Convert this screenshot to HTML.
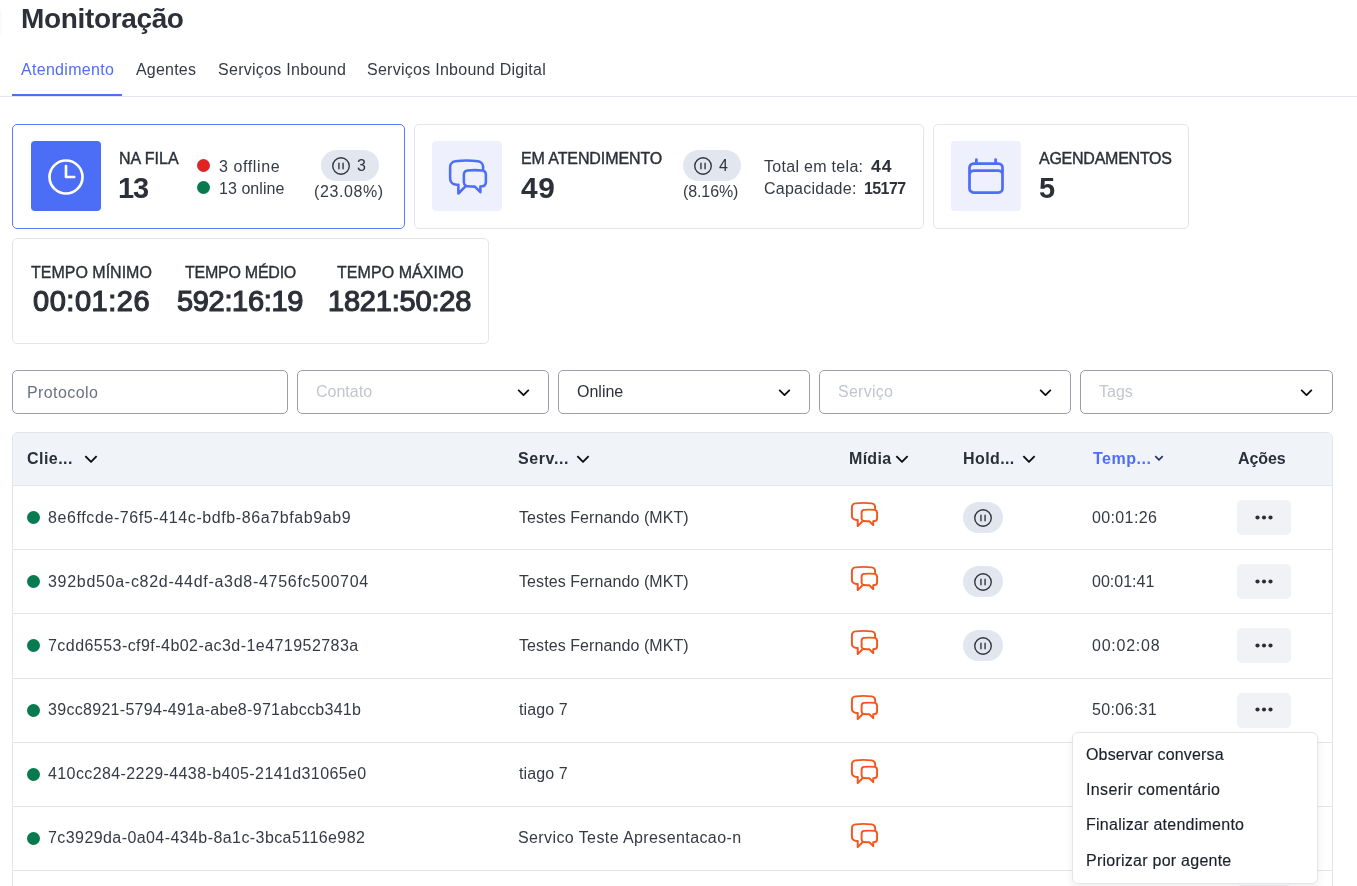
<!DOCTYPE html>
<html><head><meta charset="utf-8">
<style>
*{box-sizing:border-box;margin:0;padding:0}
html,body{width:1357px;height:886px;overflow:hidden;background:#fff}
body{font-family:"Liberation Sans",sans-serif;color:#2f333d}
#w{position:absolute;left:0;top:0;width:1357px;height:886px;will-change:transform;background:#fff}
.a{position:absolute;white-space:nowrap}
.card{position:absolute;border:1px solid #e3e5ea;border-radius:5px;background:#fff}
.ico{position:absolute;width:70px;height:70px;border-radius:4px;background:#eef1fd}
.pill{position:absolute;height:31px;border-radius:16px;background:#e2e7ef}
.dot{position:absolute;width:13px;height:13px;border-radius:50%}
.inp{position:absolute;top:370px;height:44px;border:1px solid #9a9fab;border-radius:5px;background:#fff}
.inp span{position:absolute;top:12px;font-size:16px;line-height:20px}
.chev{position:absolute}
.th{position:absolute;font-weight:700;font-size:16px;line-height:20px;top:449px;color:#2b2f38}
.row{position:absolute;left:12px;width:1321px;height:66px;border-top:1px solid #e3e5ea}
.cell{position:absolute;font-size:16px;line-height:20px;top:22px;color:#353a45}
.gdot{position:absolute;left:15px;top:25px;width:13px;height:13px;border-radius:50%;background:#087a4f}
.hp{position:absolute;left:951px;top:16px;width:40px;height:31px;border-radius:16px;background:#e2e7ef}
.more{position:absolute;left:1225px;top:14px;width:54px;height:35px;border-radius:5px;background:#f0f2f6}
</style></head><body><div id="w">
<div class="a" style="left:-10px;top:8px;width:12px;height:29px;border-radius:6px;background:#fafafa"></div>
<div class="a" style="left:21px;top:3px;font-size:28px;line-height:32px;color:#2d3039;font-weight:700;letter-spacing:-0.35px">Monitoração</div>
<div class="a" style="left:21px;top:60px;font-size:16px;line-height:20px;color:#4f6ef7;letter-spacing:0.3px">Atendimento</div>
<div class="a" style="left:136px;top:60px;font-size:16px;line-height:20px;color:#353a45;letter-spacing:0.2px">Agentes</div>
<div class="a" style="left:218px;top:60px;font-size:16px;line-height:20px;color:#353a45;letter-spacing:0.28px">Serviços Inbound</div>
<div class="a" style="left:367px;top:60px;font-size:16px;line-height:20px;color:#353a45;letter-spacing:0.27px">Serviços Inbound Digital</div>
<div class="a" style="left:0;top:96px;width:1357px;height:1px;background:#e2e6ee"></div>
<div class="a" style="left:12px;top:94px;width:110px;height:2px;background:#4f6ef7"></div>
<div class="card" style="left:12px;top:124px;width:393px;height:105px;border-color:#5b78f5"></div>
<div class="ico" style="left:31px;top:141px;background:#4c6ef6"></div>
<svg class="a" style="left:44px;top:155px" width="44" height="44" viewBox="0 0 24 24" fill="none" stroke="#fff" stroke-width="1.45" stroke-linecap="round" stroke-linejoin="round"><path d="M12 6v6h4.5m4.5 0a9 9 0 1 1-18 0 9 9 0 0 1 18 0Z"/></svg>
<div class="a" style="left:119px;top:149px;font-size:16px;line-height:20px;color:#2d3039;-webkit-text-stroke:0.4px #2d3039">NA FILA</div>
<div class="a" style="left:118px;top:173px;font-size:29px;line-height:30px;color:#2d3039;font-weight:700;letter-spacing:-1.2px">13</div>
<div class="dot" style="left:197px;top:159px;background:#e02424"></div>
<div class="dot" style="left:197px;top:181px;background:#087a4f"></div>
<div class="a" style="left:219px;top:157px;font-size:16px;line-height:20px;color:#353a45;letter-spacing:0.6px">3 offline</div>
<div class="a" style="left:219px;top:179px;font-size:16px;line-height:20px;color:#353a45;letter-spacing:0.05px">13 online</div>
<div class="pill" style="left:321px;top:150px;width:58px"></div>
<svg class="a" style="left:330px;top:155px" width="22" height="22" viewBox="0 0 24 24" fill="none" stroke="#30333c" stroke-width="1.5" stroke-linecap="round" stroke-linejoin="round"><path d="M14.25 9v6m-4.5 0V9M21 12a9 9 0 1 1-18 0 9 9 0 0 1 18 0Z"/></svg>
<div class="a" style="left:357px;top:156px;font-size:16px;line-height:20px;color:#30333c">3</div>
<div class="a" style="left:314px;top:182px;font-size:16px;line-height:20px;color:#353a45;letter-spacing:0.6px">(23.08%)</div>
<div class="card" style="left:414px;top:124px;width:510px;height:105px"></div>
<div class="ico" style="left:432px;top:141px"></div>
<svg class="a" style="left:446px;top:155px" width="44" height="44" viewBox="0 0 24 24" fill="none" stroke="#4f6ef7" stroke-width="1.4" stroke-linecap="round" stroke-linejoin="round"><path d="M20.25 8.511c.884.284 1.5 1.128 1.5 2.097v4.286c0 1.136-.847 2.1-1.98 2.193-.34.027-.68.052-1.02.072v3.091l-3-3c-1.354 0-2.694-.055-4.02-.163a2.115 2.115 0 0 1-.825-.242m9.345-8.334a2.126 2.126 0 0 0-.476-.095 48.64 48.64 0 0 0-8.048 0c-1.131.094-1.976 1.057-1.976 2.192v4.286c0 .837.46 1.58 1.155 1.951m9.345-8.334V6.637c0-1.621-1.152-3.026-2.760-3.235A48.455 48.455 0 0 0 11.25 3c-2.115 0-4.198.137-6.240.402-1.608.209-2.760 1.614-2.760 3.235v6.226c0 1.621 1.152 3.026 2.760 3.235.577.075 1.157.14 1.740.194V21l4.155-4.155"/></svg>
<div class="a" style="left:521px;top:149px;font-size:16px;line-height:20px;color:#2d3039;letter-spacing:-0.1px;-webkit-text-stroke:0.4px #2d3039">EM ATENDIMENTO</div>
<div class="a" style="left:521px;top:173px;font-size:29px;line-height:30px;color:#2d3039;font-weight:700;letter-spacing:0.5px;transform:scaleX(1.03);transform-origin:0 0">49</div>
<div class="pill" style="left:683px;top:150px;width:58px"></div>
<svg class="a" style="left:692px;top:155px" width="22" height="22" viewBox="0 0 24 24" fill="none" stroke="#30333c" stroke-width="1.5" stroke-linecap="round" stroke-linejoin="round"><path d="M14.25 9v6m-4.5 0V9M21 12a9 9 0 1 1-18 0 9 9 0 0 1 18 0Z"/></svg>
<div class="a" style="left:719px;top:156px;font-size:16px;line-height:20px;color:#30333c">4</div>
<div class="a" style="left:683px;top:182px;font-size:16px;line-height:20px;color:#353a45;letter-spacing:-0.1px">(8.16%)</div>
<div class="a" style="left:764px;top:157px;font-size:16px;line-height:20px;color:#353a45;letter-spacing:0.3px">Total em tela:</div>
<div class="a" style="left:871px;top:157px;font-size:16px;line-height:20px;color:#2d3039;font-weight:700;letter-spacing:0.8px;transform:scaleX(1.1);transform-origin:0 0">44</div>
<div class="a" style="left:764px;top:179px;font-size:16px;line-height:20px;color:#353a45;letter-spacing:0.25px">Capacidade:</div>
<div class="a" style="left:864px;top:179px;font-size:16px;line-height:20px;color:#2d3039;font-weight:700;letter-spacing:-0.6px">15177</div>
<div class="card" style="left:933px;top:124px;width:256px;height:105px"></div>
<div class="ico" style="left:951px;top:141px"></div>
<svg class="a" style="left:964px;top:154px" width="44" height="44" viewBox="0 0 24 24" fill="none" stroke="#4f6ef7" stroke-width="1.5" stroke-linecap="round" stroke-linejoin="round"><path d="M6.75 3v2.25M17.25 3v2.25M3 18.75V7.5a2.25 2.25 0 0 1 2.25-2.25h13.5A2.25 2.25 0 0 1 21 7.5v11.25m-18 0A2.25 2.25 0 0 0 5.25 21h13.5A2.25 2.25 0 0 0 21 18.75m-18 0v-7.5A2.25 2.25 0 0 1 5.25 9h13.5A2.25 2.25 0 0 1 21 11.25v7.5"/></svg>
<div class="a" style="left:1039px;top:149px;font-size:16px;line-height:20px;color:#2d3039;letter-spacing:-0.25px;-webkit-text-stroke:0.4px #2d3039">AGENDAMENTOS</div>
<div class="a" style="left:1039px;top:173px;font-size:29px;line-height:30px;color:#2d3039;font-weight:700">5</div>
<div class="card" style="left:12px;top:238px;width:477px;height:106px"></div>
<div class="a" style="left:31px;top:263px;font-size:16px;line-height:20px;color:#2d3039;-webkit-text-stroke:0.35px #2d3039">TEMPO MÍNIMO</div>
<div class="a" style="left:33px;top:286px;font-size:29px;line-height:30px;color:#2d3039;letter-spacing:0.53px;-webkit-text-stroke:1.2px #2d3039">00:01:26</div>
<div class="a" style="left:185px;top:263px;font-size:16px;line-height:20px;color:#2d3039;letter-spacing:-0.25px;-webkit-text-stroke:0.35px #2d3039">TEMPO MÉDIO</div>
<div class="a" style="left:177px;top:286px;font-size:29px;line-height:30px;color:#2d3039;letter-spacing:-0.33px;-webkit-text-stroke:1.2px #2d3039">592:16:19</div>
<div class="a" style="left:337px;top:263px;font-size:16px;line-height:20px;color:#2d3039;letter-spacing:0.05px;-webkit-text-stroke:0.35px #2d3039">TEMPO MÁXIMO</div>
<div class="a" style="left:328px;top:286px;font-size:29px;line-height:30px;color:#2d3039;letter-spacing:-0.2px;-webkit-text-stroke:1.2px #2d3039">1821:50:28</div>
<div class="inp" style="left:12px;width:276px"><span style="left:14px;color:#6b7280;letter-spacing:0.4px">Protocolo</span></div>
<div class="inp" style="left:297px;width:252px"><span style="left:18px;top:11px;color:#c2c6cd;letter-spacing:0px">Contato</span><svg class="chev" style="left:217px;top:13px" width="17" height="17" viewBox="0 0 24 24" fill="none" stroke="#0b0d12" stroke-width="2.5" stroke-linecap="butt" stroke-linejoin="round"><path d="m19.5 8.25-7.5 7.5-7.5-7.5"/></svg></div>
<div class="inp" style="left:558px;width:252px"><span style="left:18px;top:11px;color:#2d3039;letter-spacing:0px">Online</span><svg class="chev" style="left:217px;top:13px" width="17" height="17" viewBox="0 0 24 24" fill="none" stroke="#0b0d12" stroke-width="2.5" stroke-linecap="butt" stroke-linejoin="round"><path d="m19.5 8.25-7.5 7.5-7.5-7.5"/></svg></div>
<div class="inp" style="left:819px;width:252px"><span style="left:18px;top:11px;color:#c2c6cd;letter-spacing:0.25px">Serviço</span><svg class="chev" style="left:217px;top:13px" width="17" height="17" viewBox="0 0 24 24" fill="none" stroke="#0b0d12" stroke-width="2.5" stroke-linecap="butt" stroke-linejoin="round"><path d="m19.5 8.25-7.5 7.5-7.5-7.5"/></svg></div>
<div class="inp" style="left:1080px;width:253px"><span style="left:18px;top:11px;color:#c2c6cd;letter-spacing:0px">Tags</span><svg class="chev" style="left:217px;top:13px" width="17" height="17" viewBox="0 0 24 24" fill="none" stroke="#0b0d12" stroke-width="2.5" stroke-linecap="butt" stroke-linejoin="round"><path d="m19.5 8.25-7.5 7.5-7.5-7.5"/></svg></div>
<div class="a" style="left:12px;top:432px;width:1321px;height:470px;border:1px solid #e3e5ea;border-radius:6px 6px 0 0;background:#fff"></div>
<div class="a" style="left:13px;top:433px;width:1319px;height:52px;background:#f0f3f8;border-radius:5px 5px 0 0"></div>
<div class="th" style="left:27px;color:#2b2f38;letter-spacing:0.45px">Clie...</div>
<div class="th" style="left:518px;color:#2b2f38;letter-spacing:0.6px">Serv...</div>
<div class="th" style="left:849px;color:#2b2f38;letter-spacing:0.3px">Mídia</div>
<div class="th" style="left:963px;color:#2b2f38;letter-spacing:0.4px">Hold...</div>
<div class="th" style="left:1093px;color:#4f6ef7;letter-spacing:0.5px">Temp...</div>
<div class="th" style="left:1238px;color:#2b2f38;letter-spacing:-0.1px">Ações</div>
<svg class="a" style="left:82px;top:450px" width="18" height="18" viewBox="0 0 24 24" fill="none" stroke="#0b0d12" stroke-width="2.5" stroke-linecap="butt" stroke-linejoin="round"><path d="m19.5 8.25-7.5 7.5-7.5-7.5"/></svg>
<svg class="a" style="left:574px;top:450px" width="18" height="18" viewBox="0 0 24 24" fill="none" stroke="#0b0d12" stroke-width="2.5" stroke-linecap="butt" stroke-linejoin="round"><path d="m19.5 8.25-7.5 7.5-7.5-7.5"/></svg>
<svg class="a" style="left:893px;top:450px" width="18" height="18" viewBox="0 0 24 24" fill="none" stroke="#0b0d12" stroke-width="2.5" stroke-linecap="butt" stroke-linejoin="round"><path d="m19.5 8.25-7.5 7.5-7.5-7.5"/></svg>
<svg class="a" style="left:1020px;top:450px" width="18" height="18" viewBox="0 0 24 24" fill="none" stroke="#0b0d12" stroke-width="2.5" stroke-linecap="butt" stroke-linejoin="round"><path d="m19.5 8.25-7.5 7.5-7.5-7.5"/></svg>
<svg class="a" style="left:1153px;top:452px" width="12" height="12" viewBox="0 0 24 24" fill="none" stroke="#27316a" stroke-width="3.2" stroke-linecap="butt" stroke-linejoin="round"><path d="m19.5 8.25-7.5 7.5-7.5-7.5"/></svg>
<div class="row" style="top:485px"><div class="gdot"></div><div class="cell" style="left:36px;top:22px;letter-spacing:0.6px">8e6ffcde-76f5-414c-bdfb-86a7bfab9ab9</div><div class="cell" style="left:507px;top:22px;letter-spacing:0.08px">Testes Fernando (MKT)</div><svg class="a" style="left:837px;top:13px" width="31" height="31" viewBox="0 0 24 24" fill="none" stroke="#f4561f" stroke-width="1.5" stroke-linecap="round" stroke-linejoin="round"><path d="M20.25 8.511c.884.284 1.5 1.128 1.5 2.097v4.286c0 1.136-.847 2.1-1.98 2.193-.34.027-.68.052-1.02.072v3.091l-3-3c-1.354 0-2.694-.055-4.02-.163a2.115 2.115 0 0 1-.825-.242m9.345-8.334a2.126 2.126 0 0 0-.476-.095 48.64 48.64 0 0 0-8.048 0c-1.131.094-1.976 1.057-1.976 2.192v4.286c0 .837.46 1.58 1.155 1.951m9.345-8.334V6.637c0-1.621-1.152-3.026-2.760-3.235A48.455 48.455 0 0 0 11.25 3c-2.115 0-4.198.137-6.240.402-1.608.209-2.760 1.614-2.760 3.235v6.226c0 1.621 1.152 3.026 2.760 3.235.577.075 1.157.14 1.740.194V21l4.155-4.155"/></svg><div class="hp"></div><svg class="a" style="left:960px;top:21px" width="22" height="22" viewBox="0 0 24 24" fill="none" stroke="#30333c" stroke-width="1.5" stroke-linecap="round" stroke-linejoin="round"><path d="M14.25 9v6m-4.5 0V9M21 12a9 9 0 1 1-18 0 9 9 0 0 1 18 0Z"/></svg><div class="cell" style="left:1080px;top:22px;letter-spacing:0.37px">00:01:26</div><div class="more"></div><svg class="a" style="left:1243px;top:27px" width="18" height="8"><circle cx="2.5" cy="4.5" r="2.1" fill="#2b2f38"/><circle cx="9" cy="4.5" r="2.1" fill="#2b2f38"/><circle cx="15.5" cy="4.5" r="2.1" fill="#2b2f38"/></svg></div>
<div class="row" style="top:549px"><div class="gdot"></div><div class="cell" style="left:36px;top:22px;letter-spacing:0.71px">392bd50a-c82d-44df-a3d8-4756fc500704</div><div class="cell" style="left:507px;top:22px;letter-spacing:0.08px">Testes Fernando (MKT)</div><svg class="a" style="left:837px;top:13px" width="31" height="31" viewBox="0 0 24 24" fill="none" stroke="#f4561f" stroke-width="1.5" stroke-linecap="round" stroke-linejoin="round"><path d="M20.25 8.511c.884.284 1.5 1.128 1.5 2.097v4.286c0 1.136-.847 2.1-1.98 2.193-.34.027-.68.052-1.02.072v3.091l-3-3c-1.354 0-2.694-.055-4.02-.163a2.115 2.115 0 0 1-.825-.242m9.345-8.334a2.126 2.126 0 0 0-.476-.095 48.64 48.64 0 0 0-8.048 0c-1.131.094-1.976 1.057-1.976 2.192v4.286c0 .837.46 1.58 1.155 1.951m9.345-8.334V6.637c0-1.621-1.152-3.026-2.760-3.235A48.455 48.455 0 0 0 11.25 3c-2.115 0-4.198.137-6.240.402-1.608.209-2.760 1.614-2.760 3.235v6.226c0 1.621 1.152 3.026 2.760 3.235.577.075 1.157.14 1.740.194V21l4.155-4.155"/></svg><div class="hp"></div><svg class="a" style="left:960px;top:21px" width="22" height="22" viewBox="0 0 24 24" fill="none" stroke="#30333c" stroke-width="1.5" stroke-linecap="round" stroke-linejoin="round"><path d="M14.25 9v6m-4.5 0V9M21 12a9 9 0 1 1-18 0 9 9 0 0 1 18 0Z"/></svg><div class="cell" style="left:1080px;top:22px;letter-spacing:0px">00:01:41</div><div class="more"></div><svg class="a" style="left:1243px;top:27px" width="18" height="8"><circle cx="2.5" cy="4.5" r="2.1" fill="#2b2f38"/><circle cx="9" cy="4.5" r="2.1" fill="#2b2f38"/><circle cx="15.5" cy="4.5" r="2.1" fill="#2b2f38"/></svg></div>
<div class="row" style="top:613px"><div class="gdot"></div><div class="cell" style="left:36px;top:22px;letter-spacing:0.45px">7cdd6553-cf9f-4b02-ac3d-1e471952783a</div><div class="cell" style="left:507px;top:22px;letter-spacing:0.08px">Testes Fernando (MKT)</div><svg class="a" style="left:837px;top:13px" width="31" height="31" viewBox="0 0 24 24" fill="none" stroke="#f4561f" stroke-width="1.5" stroke-linecap="round" stroke-linejoin="round"><path d="M20.25 8.511c.884.284 1.5 1.128 1.5 2.097v4.286c0 1.136-.847 2.1-1.98 2.193-.34.027-.68.052-1.02.072v3.091l-3-3c-1.354 0-2.694-.055-4.02-.163a2.115 2.115 0 0 1-.825-.242m9.345-8.334a2.126 2.126 0 0 0-.476-.095 48.64 48.64 0 0 0-8.048 0c-1.131.094-1.976 1.057-1.976 2.192v4.286c0 .837.46 1.58 1.155 1.951m9.345-8.334V6.637c0-1.621-1.152-3.026-2.760-3.235A48.455 48.455 0 0 0 11.25 3c-2.115 0-4.198.137-6.240.402-1.608.209-2.760 1.614-2.760 3.235v6.226c0 1.621 1.152 3.026 2.760 3.235.577.075 1.157.14 1.740.194V21l4.155-4.155"/></svg><div class="hp"></div><svg class="a" style="left:960px;top:21px" width="22" height="22" viewBox="0 0 24 24" fill="none" stroke="#30333c" stroke-width="1.5" stroke-linecap="round" stroke-linejoin="round"><path d="M14.25 9v6m-4.5 0V9M21 12a9 9 0 1 1-18 0 9 9 0 0 1 18 0Z"/></svg><div class="cell" style="left:1080px;top:22px;letter-spacing:0.75px">00:02:08</div><div class="more"></div><svg class="a" style="left:1243px;top:27px" width="18" height="8"><circle cx="2.5" cy="4.5" r="2.1" fill="#2b2f38"/><circle cx="9" cy="4.5" r="2.1" fill="#2b2f38"/><circle cx="15.5" cy="4.5" r="2.1" fill="#2b2f38"/></svg></div>
<div class="row" style="top:678px"><div class="gdot"></div><div class="cell" style="left:36px;top:21px;letter-spacing:0.3px">39cc8921-5794-491a-abe8-971abccb341b</div><div class="cell" style="left:507px;top:21px;letter-spacing:0.1px">tiago 7</div><svg class="a" style="left:837px;top:13px" width="31" height="31" viewBox="0 0 24 24" fill="none" stroke="#f4561f" stroke-width="1.5" stroke-linecap="round" stroke-linejoin="round"><path d="M20.25 8.511c.884.284 1.5 1.128 1.5 2.097v4.286c0 1.136-.847 2.1-1.98 2.193-.34.027-.68.052-1.02.072v3.091l-3-3c-1.354 0-2.694-.055-4.02-.163a2.115 2.115 0 0 1-.825-.242m9.345-8.334a2.126 2.126 0 0 0-.476-.095 48.64 48.64 0 0 0-8.048 0c-1.131.094-1.976 1.057-1.976 2.192v4.286c0 .837.46 1.58 1.155 1.951m9.345-8.334V6.637c0-1.621-1.152-3.026-2.760-3.235A48.455 48.455 0 0 0 11.25 3c-2.115 0-4.198.137-6.240.402-1.608.209-2.760 1.614-2.760 3.235v6.226c0 1.621 1.152 3.026 2.760 3.235.577.075 1.157.14 1.740.194V21l4.155-4.155"/></svg><div class="cell" style="left:1080px;top:21px;letter-spacing:0.35px">50:06:31</div><div class="more"></div><svg class="a" style="left:1243px;top:26px" width="18" height="8"><circle cx="2.5" cy="4.5" r="2.1" fill="#2b2f38"/><circle cx="9" cy="4.5" r="2.1" fill="#2b2f38"/><circle cx="15.5" cy="4.5" r="2.1" fill="#2b2f38"/></svg></div>
<div class="row" style="top:742px"><div class="gdot"></div><div class="cell" style="left:36px;top:21px;letter-spacing:0.4px">410cc284-2229-4438-b405-2141d31065e0</div><div class="cell" style="left:507px;top:21px;letter-spacing:0.1px">tiago 7</div><svg class="a" style="left:837px;top:13px" width="31" height="31" viewBox="0 0 24 24" fill="none" stroke="#f4561f" stroke-width="1.5" stroke-linecap="round" stroke-linejoin="round"><path d="M20.25 8.511c.884.284 1.5 1.128 1.5 2.097v4.286c0 1.136-.847 2.1-1.98 2.193-.34.027-.68.052-1.02.072v3.091l-3-3c-1.354 0-2.694-.055-4.02-.163a2.115 2.115 0 0 1-.825-.242m9.345-8.334a2.126 2.126 0 0 0-.476-.095 48.64 48.64 0 0 0-8.048 0c-1.131.094-1.976 1.057-1.976 2.192v4.286c0 .837.46 1.58 1.155 1.951m9.345-8.334V6.637c0-1.621-1.152-3.026-2.760-3.235A48.455 48.455 0 0 0 11.25 3c-2.115 0-4.198.137-6.240.402-1.608.209-2.760 1.614-2.760 3.235v6.226c0 1.621 1.152 3.026 2.760 3.235.577.075 1.157.14 1.740.194V21l4.155-4.155"/></svg></div>
<div class="row" style="top:806px"><div class="gdot"></div><div class="cell" style="left:36px;top:21px;letter-spacing:0.42px">7c3929da-0a04-434b-8a1c-3bca5116e982</div><div class="cell" style="left:506px;top:21px;letter-spacing:0.4px">Servico Teste Apresentacao-n</div><svg class="a" style="left:837px;top:13px" width="31" height="31" viewBox="0 0 24 24" fill="none" stroke="#f4561f" stroke-width="1.5" stroke-linecap="round" stroke-linejoin="round"><path d="M20.25 8.511c.884.284 1.5 1.128 1.5 2.097v4.286c0 1.136-.847 2.1-1.98 2.193-.34.027-.68.052-1.02.072v3.091l-3-3c-1.354 0-2.694-.055-4.02-.163a2.115 2.115 0 0 1-.825-.242m9.345-8.334a2.126 2.126 0 0 0-.476-.095 48.64 48.64 0 0 0-8.048 0c-1.131.094-1.976 1.057-1.976 2.192v4.286c0 .837.46 1.58 1.155 1.951m9.345-8.334V6.637c0-1.621-1.152-3.026-2.760-3.235A48.455 48.455 0 0 0 11.25 3c-2.115 0-4.198.137-6.240.402-1.608.209-2.760 1.614-2.760 3.235v6.226c0 1.621 1.152 3.026 2.760 3.235.577.075 1.157.14 1.740.194V21l4.155-4.155"/></svg></div>
<div class="row" style="top:870px"><div class="more"></div></div>
<div class="a" style="left:1072px;top:732px;width:246px;height:152px;background:#fff;border:1px solid #e3e5ea;border-radius:6px;box-shadow:0 4px 8px rgba(0,0,0,0.07)"></div>
<div class="a" style="left:1086px;top:745px;font-size:16px;line-height:20px;color:#1c202b;letter-spacing:0.15px;-webkit-text-stroke:0.15px #1c202b">Observar conversa</div>
<div class="a" style="left:1086px;top:780px;font-size:16px;line-height:20px;color:#1c202b;letter-spacing:0.35px;-webkit-text-stroke:0.15px #1c202b">Inserir comentário</div>
<div class="a" style="left:1086px;top:815px;font-size:16px;line-height:20px;color:#1c202b;letter-spacing:0.25px;-webkit-text-stroke:0.15px #1c202b">Finalizar atendimento</div>
<div class="a" style="left:1086px;top:851px;font-size:16px;line-height:20px;color:#1c202b;letter-spacing:0.25px;-webkit-text-stroke:0.15px #1c202b">Priorizar por agente</div>
</div></body></html>
